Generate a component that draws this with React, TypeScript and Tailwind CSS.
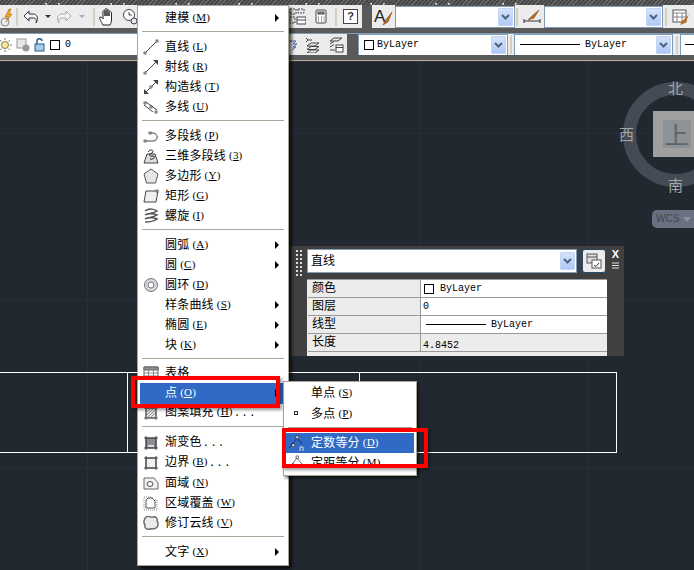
import type { ReactNode } from "react";

const CJK = "font-['Noto_Sans_CJK_SC','Liberation_Sans',sans-serif]";
const MONO = "font-['Liberation_Mono','Noto_Sans_CJK_SC',monospace]";

function Icon({ children, className = "" }: { children: ReactNode; className?: string }) {
  return (
    <svg viewBox="0 0 16 16" className={`w-4 h-4 shrink-0 ${className}`} fill="none" stroke="#444" strokeWidth="1">
      {children}
    </svg>
  );
}

const Dot = ({ x, y }: { x: number; y: number }) => <rect x={x - 1} y={y - 1} width="2" height="2" fill="#fff" stroke="#333" strokeWidth="0.7" />;

const icons: Record<string, ReactNode> = {
  line: <Icon><path d="M2 14 14 2" /><Dot x={2} y={14} /><Dot x={14} y={2} /></Icon>,
  ray: <Icon><path d="M2 14 14 2" /><Dot x={2} y={14} /><path d="M15 1v5l-5-5z" fill="#444" stroke="none" /></Icon>,
  xline: <Icon><path d="M2 14 14 2" /><Dot x={8} y={8} /><path d="M15 1v5l-5-5z" fill="#444" stroke="none" /><path d="M1 15v-5l5 5z" fill="#444" stroke="none" /></Icon>,
  mline: <Icon><path d="M3 3 14 11M1 6l9 7" /><Dot x={2} y={4} /><Dot x={8} y={8} /><Dot x={13} y={13} /></Icon>,
  pline: <Icon><path d="M2 13H10C16 13 15 5 10 5H7" /><Dot x={2} y={13} /><Dot x={7} y={5} /></Icon>,
  poly3d: <Icon><path d="M1 15 4 6H12L15 15Z" fill="#ddd" /><path d="M5 4C8 0 12 3 9 5 5 6 6 9 10 8 13 8 11 12 7 11" stroke="#222" /></Icon>,
  polygon: <Icon><path d="M8 1 15 6 12.5 15H3.5L1 6Z" fill="#e4e7ea" stroke="#555" /></Icon>,
  rect: <Icon><path d="M3 3H15L13 14H1Z" fill="#eef0f2" stroke="#444" /><Dot x={14} y={3} /></Icon>,
  helix: <Icon><path d="M2 3C6 0 12 1 14 3 10 6 5 5 2 7 6 4 11 6 14 7 10 10 5 9 2 11 6 8 11 10 14 11 10 14 5 14 2 14" stroke="#555" strokeWidth="1.5" /></Icon>,
  donut: <Icon><circle cx="8" cy="8" r="6.5" fill="#d5d8dc" stroke="#777" /><circle cx="8" cy="8" r="3" fill="#fff" stroke="#777" /></Icon>,
  table: <Icon><path d="M1 2H15V14H1Z" fill="#fff" stroke="#666" /><path d="M1 2H15V5H1Z" fill="#8a8f96" stroke="#666" /><path d="M1 8H15M1 11H15M5.5 5V14M10.5 5V14" stroke="#888" /></Icon>,
  hatch: <Icon><path d="M3 3H13V13H3Z" fill="#e2e2e2" /><path d="M1 3H15M1 13H15M3 1V15M13 1V15" stroke="#666" /><path d="M4 7 7 4M4 10 10 4M5 12 12 5M8 12 12 8" stroke="#999" /></Icon>,
  gradient: <Icon><path d="M3 3H13V13H3Z" fill="#8b8f95" /><path d="M5 10H11V12H5Z" fill="#ddd" stroke="none" /><path d="M1 3H15M1 13H15M3 1V15M13 1V15" /></Icon>,
  boundary: <Icon><path d="M3 3H13V13H3Z" fill="#eef0f2" /><path d="M1 3H15M1 13H15M3 1V15M13 1V15" /></Icon>,
  region: <Icon><path d="M1 3H11L15 8V14H1Z" fill="#f2f2f2" stroke="#666" /><ellipse cx="7" cy="9" rx="3" ry="2.5" stroke="#555" /></Icon>,
  wipeout: <Icon><path d="M1 2H9V5H14V15H1Z" fill="#fff" stroke="#888" strokeDasharray="1 1" /><path d="M5 3H9L12 6V13H3V5Z" fill="#fff" stroke="#555" /></Icon>,
  cloud: <Icon><path d="M3 2C6 0 8 3 10 2 13 1 15 4 14 6 16 8 15 12 13 13 11 15 9 13 7 14 4 15 1 13 2 10 0 8 1 4 3 2Z" fill="#e8eaec" stroke="#666" strokeWidth="1.4" /></Icon>,
};

type Row = { label: string; key?: string; tail?: string; icon?: string; arrow?: boolean; active?: boolean };
type Group = { rows: Row[]; sep?: string };

const groups: Group[] = [
  { sep: "h-[9px]", rows: [{ label: "建模", key: "M", arrow: true }] },
  {
    sep: "h-[9px]",
    rows: [
      { label: "直线", key: "L", icon: "line" },
      { label: "射线", key: "R", icon: "ray" },
      { label: "构造线", key: "T", icon: "xline" },
      { label: "多线", key: "U", icon: "mline" },
    ],
  },
  {
    sep: "h-[9px]",
    rows: [
      { label: "多段线", key: "P", icon: "pline" },
      { label: "三维多段线", key: "3", icon: "poly3d" },
      { label: "多边形", key: "Y", icon: "polygon" },
      { label: "矩形", key: "G", icon: "rect" },
      { label: "螺旋", key: "I", icon: "helix" },
    ],
  },
  {
    sep: "h-[8px]",
    rows: [
      { label: "圆弧", key: "A", arrow: true },
      { label: "圆", key: "C", arrow: true },
      { label: "圆环", key: "D", icon: "donut" },
      { label: "样条曲线", key: "S", arrow: true },
      { label: "椭圆", key: "E", arrow: true },
      { label: "块", key: "K", arrow: true },
    ],
  },
  {
    sep: "h-[10px]",
    rows: [
      { label: "表格", icon: "table" },
      { label: "点", key: "O", arrow: true, active: true },
      { label: "图案填充", key: "H", tail: "...", icon: "hatch" },
    ],
  },
  {
    sep: "h-[9px]",
    rows: [
      { label: "渐变色", tail: "...", icon: "gradient" },
      { label: "边界", key: "B", tail: "...", icon: "boundary" },
      { label: "面域", key: "N", icon: "region" },
      { label: "区域覆盖", key: "W", icon: "wipeout" },
      { label: "修订云线", key: "V", icon: "cloud" },
    ],
  },
  { rows: [{ label: "文字", key: "X", arrow: true }] },
];

function Label({ label, k, tail }: { label: string; k?: string; tail?: string }) {
  return (
    <span className={`${CJK} text-[12px] leading-none whitespace-nowrap tracking-[0.2px] relative -top-px`}>
      {label}
      {k && (
        <span className="font-['Liberation_Serif',serif] text-[11px] ml-[3px] relative -top-px">
          (<span className="underline">{k}</span>)
        </span>
      )}
      {tail && <span className="font-['Liberation_Mono',monospace] text-[11px] tracking-[1px] ml-[1px]">{tail}</span>}
    </span>
  );
}

function MenuRow({ row }: { row: Row }) {
  return (
    <div className={`h-5 flex items-center relative ${row.active ? "bg-[#316ac5] text-white shadow-[0_1px_0_#316ac5]" : "text-black"}`}>
      <div className="w-[25px] pl-[3px] flex items-center shrink-0">{row.icon && icons[row.icon]}</div>
      <Label label={row.label} k={row.key} tail={row.tail} />
      {row.arrow && <span className="ml-auto mr-[7px] w-0 h-0 border-y-[4px] border-y-transparent border-l-[4px] border-l-black" />}
    </div>
  );
}

function DrawMenu() {
  return (
    <div className="absolute left-[137px] top-[5px] w-[152px] h-[561px] bg-white border border-[#a8a698] pt-[2px] px-[2px] shadow-[3px_3px_3px_rgba(0,0,0,0.65)] z-20">
      {groups.map((g, i) => (
        <div key={i}>
          {g.rows.map((r) => (
            <MenuRow key={r.label} row={r} />
          ))}
          {g.sep && (
            <div className={`${g.sep} pt-[3px] px-[2px]`}>
              <div className="h-px bg-[#a9a597]" />
            </div>
          )}
        </div>
      ))}
    </div>
  );
}

function PointSubmenu() {
  return (
    <div className="absolute left-[283px] top-[381px] w-[134px] h-[95px] bg-white border border-[#a8a698] pt-[1px] px-[2px] shadow-[2px_2px_3px_rgba(0,0,0,0.6)] z-30 overflow-hidden">
      <div className="h-5 flex items-center pl-[25px] text-black"><Label label="单点" k="S" /></div>
      <div className="h-5 flex items-center text-black relative">
        <span className="absolute left-[8px] top-[8px] w-[4px] h-[4px] border border-[#333] bg-white" />
        <span className="pl-[25px]"><Label label="多点" k="P" /></span>
      </div>
      <div className="h-[10px] pt-[4px] px-[2px]"><div className="h-px bg-[#a9a597]" /></div>
      <div className="h-5 flex items-center bg-[#316ac5] text-white">
        <svg viewBox="0 0 20 20" className="w-5 h-5 shrink-0 ml-[1px] mr-[4px]" fill="none" stroke="#16233f" strokeWidth="0.8">
          <path d="M2 15 10 5 15 11" />
          <rect x="9" y="3" width="2.5" height="2.5" fill="#fff" stroke="#222" strokeWidth="0.6" />
          <rect x="5" y="11" width="2.5" height="2.5" fill="#fff" stroke="#222" strokeWidth="0.6" />
          <path d="M13 18v-4h3v4" stroke="#fff" />
        </svg>
        <Label label="定数等分" k="D" />
      </div>
      <div className="h-5 flex items-center text-black">
        <svg viewBox="0 0 20 20" className="w-5 h-5 shrink-0 ml-[1px] mr-[4px]" fill="none" stroke="#444" strokeWidth="0.8">
          <path d="M2 15 10 5 15 11" />
          <rect x="9" y="3" width="2.5" height="2.5" fill="#fff" stroke="#222" strokeWidth="0.6" />
          <rect x="5" y="11" width="2.5" height="2.5" fill="#fff" stroke="#222" strokeWidth="0.6" />
        </svg>
        <Label label="定距等分" k="M" />
      </div>
    </div>
  );
}

function Combo({ w, children }: { w: string; children?: ReactNode }) {
  return (
    <div className={`${w} h-[22px] bg-white border border-[#7f9db9] flex items-center relative shrink-0`}>
      <div className="flex-1 flex items-center min-w-0 overflow-hidden">{children}</div>
      <div className="w-[15px] h-[18px] mr-px bg-gradient-to-b from-[#d6e3fb] to-[#aec8f5] border border-[#c3d4f5] rounded-[1px] flex items-center justify-center shrink-0">
        <svg viewBox="0 0 9 6" className="w-[9px] h-[6px]"><path d="M1 1 4.5 4.5 8 1" fill="none" stroke="#4d6185" strokeWidth="2" /></svg>
      </div>
    </div>
  );
}

const Sep = ({ className = "" }: { className?: string }) => <div className={`w-[2px] h-[18px] bg-[#d4cfc0] shrink-0 ${className}`} />;
const Caret = ({ color }: { color: string }) => <span className="block w-0 h-0 border-x-[3px] border-x-transparent border-t-[3px] shrink-0" style={{ borderTopColor: color }} />;

const ByLayerLine = () => (
  <span className={`${MONO} text-[10px] text-black flex items-center pl-[5px]`}>
    <span className="w-[60px] h-px bg-black mr-[5px]" />ByLayer
  </span>
);

function Toolbars() {
  return (
    <div className="shrink-0">
      <div className="h-[5px] bg-[repeating-linear-gradient(135deg,#6a6a6a_0_1px,#484848_1px_3px)] overflow-hidden relative">
        {[45, 110, 175, 238, 305, 370, 435, 502].map((x) => (
          <span key={x} className="absolute top-[3px] h-[2px] w-[15px] border-x-2 border-white/80 rounded-b-[3px]" style={{ left: x }} />
        ))}
      </div>
      <div className="h-[23px] bg-[#ececec] flex items-center">
        <div className="w-[289px] flex items-center shrink-0 h-full">
          <svg viewBox="0 0 15 20" className="w-[15px] h-5 shrink-0">
            <circle cx="5" cy="15" r="4" fill="none" stroke="#888" />
            <path d="M9 2 5 10H8L6 15 12 7H9L11 2Z" fill="#f0a418" stroke="#a85d0a" strokeWidth="0.5" />
          </svg>
          <Sep className="ml-px" />
          <svg viewBox="0 0 16 14" className="w-[16px] h-[14px] ml-[5px] shrink-0"><path d="M6 1 1 6 6 11V8H10C13 8 14 10 13 13 16 8 14 4 10 4H6Z" fill="#f4f4f4" stroke="#333" /></svg>
          <span className="ml-[6px]"><Caret color="#333" /></span>
          <svg viewBox="0 0 16 14" className="w-[16px] h-[14px] ml-[5px] shrink-0"><path d="M10 1 15 6 10 11V8H6C3 8 2 10 3 13 0 8 2 4 6 4H10Z" fill="#f4f4f4" stroke="#aaa" /></svg>
          <span className="ml-[7px]"><Caret color="#aaa" /></span>
          <Sep className="ml-[8px]" />
          <svg viewBox="0 0 18 18" className="w-[18px] h-[18px] ml-[3px] shrink-0"><path d="M5 17C3 13 1 11 2 9 4 9 5 11 5 11V4C5 2 7 2 7 4V8 2C7 0 9 0 9 2V8 3C9 1 11 1 11 3V8 5C11 3 13.5 3 13.5 5V11C13.5 14 13 15 12 17Z" fill="#fff" stroke="#222" /></svg>
          <svg viewBox="0 0 16 18" className="w-4 h-[18px] ml-[6px] shrink-0"><circle cx="7" cy="7" r="5.5" fill="#fff" stroke="#444" /><path d="M7 4V7H10" stroke="#444" fill="none" /><circle cx="12" cy="13" r="3" fill="#dfe8f5" stroke="#444" /></svg>
        </div>
        <svg viewBox="0 0 17 18" className="w-[17px] h-[18px] shrink-0" fill="none" stroke="#444"><path d="M1 1H7V6H1ZM9 1H15V5H9ZM1 9H6V15H1Z" strokeDasharray="2 1" /><rect x="8" y="9" width="9" height="7" fill="#fff" /><path d="M8 12H17" /></svg>
        <svg viewBox="0 0 12 15" className="w-[12px] h-[15px] ml-[9px] shrink-0" fill="#fff" stroke="#444"><rect x="1" y="1" width="10" height="13" rx="1" /><rect x="3" y="3" width="6" height="2" fill="#999" /><path d="M3 8H4M6 8H7M8.5 8H9.5M3 10H4M6 10H7M8.5 10H9.5M3 12H4M6 12H7M8.5 12H9.5" /></svg>
        <Sep className="ml-[8px]" />
        <div className="ml-[6px] w-[15px] h-[15px] bg-white border border-[#444] flex items-center justify-center text-[11px] font-bold text-[#333] font-['Liberation_Sans',sans-serif] shrink-0">?</div>
        <div className="w-[4px] shrink-0" />
        <div className="flex-1 self-stretch bg-[#5a5a5a] flex items-center min-w-0 overflow-hidden">
          <div className="w-[10px] self-stretch shrink-0" />
          <div className="w-[23px] self-stretch bg-[#ececec] flex items-center justify-center shrink-0">
            <svg viewBox="0 0 20 18" className="w-5 h-[18px]"><text x="0" y="14" fontFamily="Liberation Sans" fontSize="17" fill="#222">A</text><path d="M18 4 11 13 9 17 14 14Z" fill="#c46a1a" stroke="#6b3408" strokeWidth="0.5" /></svg>
          </div>
          <Combo w="w-[120px]" />
          <div className="w-[29px] self-stretch bg-[#ececec] flex items-center shrink-0 pl-[1px]">
            <Sep />
            <svg viewBox="0 0 18 14" className="w-[18px] h-[14px] ml-[5px]"><path d="M1 9V13M17 9V13M1 11H17" stroke="#333" fill="none" /><path d="M16 0 9 6 5 10 11 8Z" fill="#c46a1a" stroke="#6b3408" strokeWidth="0.5" /></svg>
          </div>
          <Combo w="w-[119px]" />
          <div className="flex-1 self-stretch bg-[#ececec] flex items-center pl-[2px]">
            <Sep />
            <svg viewBox="0 0 18 16" className="w-[18px] h-4 ml-[5px]"><rect x="1" y="1" width="13" height="12" fill="#fff" stroke="#555" /><path d="M1 4H14M1 8H14M5 4V13M10 4V13" stroke="#888" /><path d="M17 6 10 12 8 16 13 14Z" fill="#c46a1a" /></svg>
          </div>
        </div>
      </div>
      <div className="h-[5px] bg-[#5a5a5a]" />
      <div className="h-[22px] bg-[#ececec] flex items-center border-t border-t-[#7f9db9]">
        <div className="w-[289px] h-full flex items-center shrink-0 bg-white">
          <svg viewBox="0 0 14 14" className="w-[14px] h-[14px] -ml-[2px] shrink-0"><circle cx="7" cy="7" r="3.5" fill="#f7e7a0" stroke="#8a7a30" /><path d="M7 0V2M7 12V14M0 7H2M12 7H14M2 2 3.5 3.5M10.5 10.5 12 12M2 12 3.5 10.5M10.5 3.5 12 2" stroke="#777" /></svg>
          <svg viewBox="0 0 14 14" className="w-[14px] h-[14px] ml-[4px] shrink-0"><rect x="1" y="1" width="9" height="9" fill="#e8e8e8" stroke="#999" /><circle cx="10" cy="10" r="3.5" fill="#999" /></svg>
          <svg viewBox="0 0 12 14" className="w-[12px] h-[14px] ml-[4px] shrink-0"><rect x="1" y="6" width="9" height="7" fill="#a9cbe8" stroke="#1f5f92" /><path d="M3 6V3C3 0 8 0 8 3" fill="none" stroke="#1f5f92" strokeWidth="1.5" /></svg>
          <span className="ml-[4px] w-[10px] h-[10px] border border-black bg-white shrink-0" />
          <span className={`${MONO} text-[10px] text-black ml-[5px]`}>0</span>
        </div>
        <div className="w-[58px] flex items-center shrink-0 h-full">
          <svg viewBox="0 0 9 16" className="w-[9px] h-4 shrink-0" fill="none" stroke="#3f6fa8"><path d="M0 4H7L4 7H8L4 10H7L3 13" /></svg>
          <svg viewBox="0 0 16 16" className="w-4 h-4 ml-[7px] shrink-0" fill="none" stroke="#444"><path d="M1 1 3 3 1 5M3 3H7M6 6H14L10 9H2ZM6 9.5H14L10 12.5H2ZM6 13H14L10 16H2Z" /></svg>
          <svg viewBox="0 0 16 16" className="w-4 h-4 ml-[7px] shrink-0" fill="none" stroke="#444"><path d="M6 1H14L10 4H2ZM2 7 6 4.5M2 10 6 7.5M2 13H7" /><rect x="8" y="8" width="7" height="7" fill="#fff" /><path d="M8 10.5H15" /></svg>
        </div>
        <div className="flex-1 h-full bg-[#5a5a5a] flex items-center min-w-0 overflow-hidden pl-[11px]">
          <Combo w="w-[150px]">
            <span className="ml-[5px] w-[10px] h-[10px] border border-black mr-[3px] shrink-0" />
            <span className={`${MONO} text-[10px] text-black`}>ByLayer</span>
          </Combo>
          <div className="w-[6px] self-stretch bg-[#ececec] flex items-center justify-center shrink-0"><Sep /></div>
          <Combo w="w-[159px]"><ByLayerLine /></Combo>
          <div className="w-[7px] self-stretch bg-[#ececec] flex items-center justify-center shrink-0"><Sep /></div>
          <div className="flex-1 h-[22px] bg-white border-l border-y border-[#7f9db9] flex items-center"><span className="ml-1 w-[10px] h-px bg-black" /></div>
        </div>
      </div>
      <div className="h-[5px] bg-[#5a5a5a]" />
      <div className="h-[2px] bg-[#b5ae9e] border-b border-b-[#333]" />
    </div>
  );
}

function PropertyRow({ label, grey, children }: { label: string; grey?: boolean; children: ReactNode }) {
  return (
    <>
      <div className={`${CJK} h-[18px] bg-[#ececec] border-b border-r border-[#9a9a9a] text-[12px] leading-[13px] pl-[4px] text-black`}>{label}</div>
      <div className={`h-[18px] border-b border-[#9a9a9a] flex items-center ${grey ? "bg-[#ececec]" : "bg-white"}`}>{children}</div>
    </>
  );
}

function Palette() {
  return (
    <div className="absolute left-[291px] top-[246px] w-[333px] h-[110px] bg-[#404040] flex z-10">
      <div className="w-[16px] pt-[3px] pl-[4px] shrink-0">
        <div className="w-[8px] h-[27px] bg-[radial-gradient(#d8d8d8_1px,transparent_1.1px)] bg-[length:4px_4px]" />
      </div>
      <div className="w-[300px] bg-[#ececec] shrink-0 relative">
        <div className="h-[33px] bg-[#404040] flex items-start pt-[3px]">
          <div className="w-[270px]"><Combo w="w-[270px] !h-[24px]"><span className={`${CJK} text-[12px] ml-[3px] text-black relative -top-px`}>直线</span></Combo></div>
          <div className="ml-[5px] w-[24px] h-[24px] rounded-[3px] border border-[#1f4a70] bg-[#ececec] flex items-center justify-center">
            <svg viewBox="0 0 16 16" className="w-4 h-4" fill="none" stroke="#555"><rect x="1" y="1" width="10" height="9" fill="#ddd" /><path d="M1 4H11" /><rect x="6" y="7" width="9" height="8" fill="#fff" /><path d="M8 12 10 13.5 13 10" stroke="#333" /></svg>
          </div>
        </div>
        <div className="grid grid-cols-[113px_1fr] pl-[1px] border-t border-[#9a9a9a]">
          <PropertyRow label="颜色">
            <span className="ml-[3px] w-[10px] h-[10px] border border-black mr-[6px]" />
            <span className={`${MONO} text-[10px] text-black`}>ByLayer</span>
          </PropertyRow>
          <PropertyRow label="图层"><span className={`${MONO} text-[10px] text-black ml-[2px]`}>0</span></PropertyRow>
          <PropertyRow label="线型"><ByLayerLine /></PropertyRow>
          <PropertyRow label="长度" grey><span className={`${MONO} text-[10px] text-black ml-[2px] pt-[5px]`}>4.8452</span></PropertyRow>
        </div>
      </div>
      <div className="flex-1 flex flex-col items-center pt-[3px]">
        <span className="text-white font-bold text-[11px] leading-[10px] font-['Liberation_Sans',sans-serif]">X</span>
        <svg viewBox="0 0 8 8" className="w-2 h-2 mt-[3px]" stroke="#ddd"><path d="M0 1H7M0 3.5H7M0 6H7" /></svg>
      </div>
    </div>
  );
}

function ViewCube() {
  const label = `${CJK} absolute text-[15px] leading-none text-[#a3a5a8]`;
  return (
    <div className="absolute left-[623px] top-[20px] w-[110px] h-[150px] text-center">
      <div className="absolute left-0 top-0 w-[105px] h-[105px] rounded-full border-[13px] border-[#434b54]" />
      <div className="absolute left-[30px] top-[29px] w-[47px] h-[46px] bg-[#9f9f9f] flex items-center justify-center">
        <div className={`${CJK} w-[28px] h-[28px] bg-[#8d9296] text-[#5e6265] text-[24px] leading-[28px]`}>上</div>
      </div>
      <span className={`${label} left-[45px] -top-[2px]`}>北</span>
      <span className={`${label} -left-[4px] top-[44px]`}>西</span>
      <span className={`${label} left-[45px] top-[95px]`}>南</span>
      <div className="absolute left-[29px] top-[128px] w-[50px] h-[18px] rounded-[5px] bg-[#6b7080] flex items-center pl-[4px] gap-[4px]">
        <span className="font-['Liberation_Sans',sans-serif] text-[10px] text-[#3f4550] leading-none">WCS</span>
        <span className="w-0 h-0 border-x-[4px] border-x-transparent border-t-[5px] border-t-[#8d92a0]" />
      </div>
    </div>
  );
}

export default function App() {
  return (
    <div className="w-[694px] h-[570px] overflow-hidden relative flex flex-col bg-[#212830]">
      <Toolbars />
      <div className="flex-1 relative">
        {/* faint grid */}
        <div className="absolute left-0 right-0 top-[71px] h-px bg-[#272f38]" />
        <div className="absolute left-0 right-0 top-[238px] h-px bg-[#272f38]" />
        <div className="absolute left-0 right-0 top-[405px] h-px bg-[#272f38]" />
        <div className="absolute top-0 bottom-0 left-[87px] w-px bg-[#272f38]" />
        <div className="absolute top-0 bottom-0 left-[420px] w-px bg-[#272f38]" />
        <div className="absolute top-0 bottom-0 left-[587px] w-px bg-[#272f38]" />
        {/* drawing lines */}
        <div className="absolute left-[-2px] top-[310px] w-[619px] h-[81px] border border-white" />
        <div className="absolute left-[127px] top-[310px] w-px h-[81px] bg-white" />
        <div className="absolute left-[359px] top-[310px] w-px h-[81px] bg-white" />
        <ViewCube />
      </div>
      <Palette />
      <DrawMenu />
      <PointSubmenu />
      <div className="absolute left-[131px] top-[376px] w-[149px] h-[32px] border-[4px] border-[#f00] shadow-[2px_2px_3px_rgba(0,0,0,0.4)] z-40" />
      <div className="absolute left-[282px] top-[428px] w-[146px] h-[40px] border-[4px] border-[#f00] shadow-[2px_2px_3px_rgba(0,0,0,0.4)] z-40" />
    </div>
  );
}
